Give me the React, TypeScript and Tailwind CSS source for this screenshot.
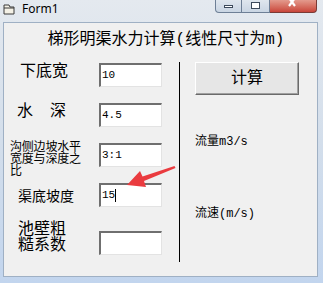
const cjk = { fontFamily: '"Liberation Mono", "Noto Sans CJK SC", monospace' };

const TextBox = ({ value, caret }: { value?: string; caret?: boolean }) => (
  <div
    className="w-[63px] h-[24px] bg-white flex items-center pl-[1px] border-t-2 border-l-2 border-t-[#6f6f6f] border-l-[#6f6f6f] border-r border-b border-r-[#e3e3e3] border-b-[#e3e3e3] text-[11px] text-black"
    style={{ fontFamily: '"Liberation Mono", monospace' }}
  >
    {value}
    {caret && <span className="inline-block w-[1px] h-[13px] bg-black" />}
  </div>
);

const Arrow = () => (
  <svg className="absolute left-0 top-0 pointer-events-none" width="323" height="283">
    <polygon
      points="127,185 146,187 144,181 175.5,168 174.5,166 142.5,176.5 140,171"
      fill="#ea3b3f"
    />
  </svg>
);

const App = () => {
  return (
    <div className="relative w-[323px] h-[283px] overflow-hidden bg-gradient-to-b from-[#e4e9ef] via-[#d3deeb] to-[#c2d5ee]">
      {/* title bar */}
      <div className="h-[22px] flex items-start">
        <svg className="ml-[3px] mt-[4px]" width="12" height="11" viewBox="0 0 12 11">
          <path d="M1 1h5l1 2h4v7H1z" fill="#f4f1e6" stroke="#3a3a3a" strokeWidth="1" />
          <path d="M1 4h10" stroke="#3a3a3a" strokeWidth="1" />
        </svg>
        <span
          className="ml-[7px] mt-[2px] text-[12px] leading-[14px] text-black"
          style={{ fontFamily: '"Noto Sans", sans-serif' }}
        >
          Form1
        </span>
        <div className="ml-auto mr-[6px] flex">
          <div className="w-[27px] h-[13px] rounded-bl-[4px] border border-t-0 border-[#6d7f96] bg-gradient-to-b from-[#dfe6ee] to-[#c9d5e3] flex items-center justify-center">
            <div className="w-[9px] h-[3px] border border-[#3c4a5c] bg-white" />
          </div>
          <div className="w-[28px] h-[13px] border-b border-r border-[#6d7f96] bg-gradient-to-b from-[#dfe6ee] to-[#c9d5e3] flex items-center justify-center">
            <div className="w-[9px] h-[7px] border border-[#3c4a5c] bg-white -mt-[2px]" />
          </div>
          <div className="w-[47px] h-[13px] rounded-br-[4px] border border-t-0 border-l-0 border-[#7a3b36] bg-gradient-to-b from-[#e39a8d] to-[#c8443a] flex items-start justify-center">
            <svg width="12" height="8" viewBox="0 0 12 8">
              <path d="M2 -2L8 6M8 -2L2 6" stroke="white" strokeWidth="2.2" />
            </svg>
          </div>
        </div>
      </div>

      {/* client area */}
      <div className="ml-[3px] w-[315px] h-[255px] bg-[#f0f0f0] border border-[#9fb0c4] text-black" style={cjk}>
        <div className="h-[34px] flex items-center justify-center pl-[11px] text-[16px] leading-[18px]">
          梯形明渠水力计算(线性尺寸为m)
        </div>
        <div className="flex">
          <div className="w-[175px] pt-[6px] flex flex-col">
            <div className="h-[24px] flex items-start">
              <div className="w-[95px] pl-[16px] mt-[1px] text-[16px] leading-[16px]">下底宽</div>
              <TextBox value="10" />
            </div>
            <div className="h-[24px] mt-[16px] flex items-start">
              <div className="w-[95px] pl-[13px] mt-[1px] text-[16px] leading-[16px] flex">
                <span>水</span>
                <span className="ml-[17px]">深</span>
              </div>
              <TextBox value="4.5" />
            </div>
            <div className="h-[24px] mt-[16px] flex items-start">
              <div className="w-[95px] pl-[6px] -mt-[1px] text-[12px] leading-[12px] tracking-[-0.2px]">
                <div className="h-[12px]">沟侧边坡水平</div>
                <div className="h-[12px]">宽度与深度之</div>
                <div className="h-[12px]">比</div>
              </div>
              <TextBox value="3:1" />
            </div>
            <div className="h-[24px] mt-[16px] flex items-start">
              <div className="w-[95px] pl-[14px] mt-[7px] text-[14px] leading-[15px]">渠底坡度</div>
              <TextBox value="15" caret />
            </div>
            <div className="h-[23px] mt-[24px] flex items-start">
              <div className="w-[95px] pl-[14px] -mt-[9px] text-[16px] leading-[16px]">
                <div className="h-[16px]">池壁粗</div>
                <div className="h-[16px]">糙系数</div>
              </div>
              <TextBox />
            </div>
          </div>
          <div className="w-[1px] h-[200px] mt-[5px] bg-black" />
          <div className="flex flex-col pl-[15px] pt-[5px]">
            <div className="w-[104px] h-[33px] flex items-center justify-center bg-[#e6e6e6] border-t border-l border-white border-r border-b border-r-[#6a6a6a] border-b-[#6a6a6a] shadow-[inset_-1px_-1px_0_#a0a0a0] text-[16px]">
              计算
            </div>
            <div className="mt-[41px] text-[12px] leading-[12px]">流量m3/s</div>
            <div className="mt-[60px] text-[12px] leading-[12px]">流速(m/s)</div>
          </div>
        </div>
      </div>
      <Arrow />
    </div>
  );
};

export default App;
